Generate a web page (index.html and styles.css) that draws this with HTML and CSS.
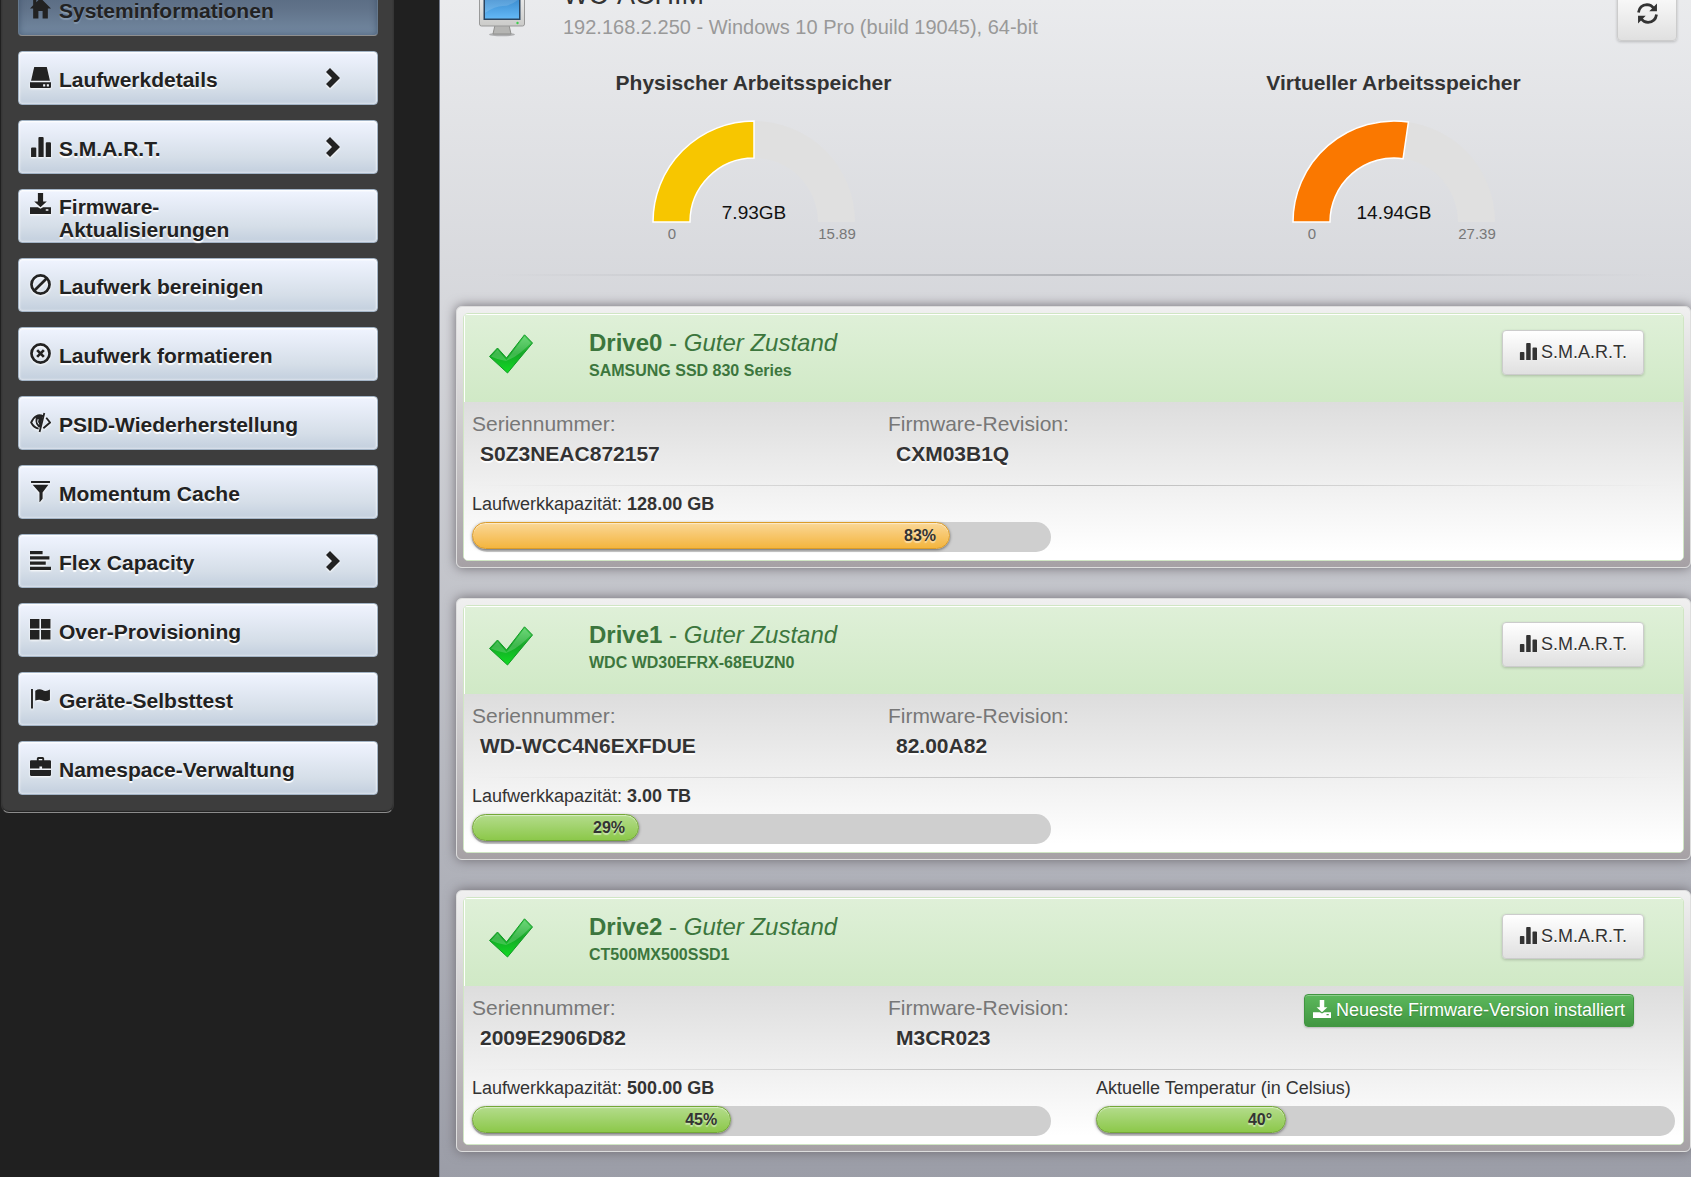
FILE: index.html
```
<!DOCTYPE html>
<html lang="de">
<head>
	<meta charset="utf-8">
	<title>Systeminformationen</title>
	<link rel="stylesheet" href="styles.css">
</head>
<body>
	<svg class="sprite" aria-hidden="true">
		<symbol id="i-home" viewBox="0 0 20 20"><path d="M10 0L20 10h-3v9.500h-5V12.500H8v7H3V10H0L3 7V1.500h3V4z"/></symbol>
		<symbol id="i-hdd" viewBox="0 0 20 20"><path d="M4 0h12l3 13H1z"/><path fill-rule="evenodd" d="M0 14.500h20V19q0 1-1 1H1q-1 0-1-1zM12.500 16.500v2h2v-2zM16 16.500v2h2v-2z"/></symbol>
		<symbol id="i-graph" viewBox="0 0 20 20"><path d="M1 12q0-1 1-1h3q1 0 1 1v8H1zM8 2q0-1 1-1h3q1 0 1 1v18H8zM15 7q0-1 1-1h3q1 0 1 1v13h-5z"/></symbol>
		<symbol id="i-download" viewBox="0 0 20 20"><path d="M7.500 0h5v8h3.500L10 13.500 4 8h3.500z"/><path fill-rule="evenodd" d="M0 13.500h7.500l2.500 1.500 2.500-1.500H20V20H0zM15 15.500v1.500h2.500v-1.500z"/></symbol>
		<symbol id="i-ban" viewBox="0 0 20 20"><g fill="none" stroke="currentColor" stroke-width="2.600"><circle cx="10" cy="10" r="8.600"/><path d="M4 16L16 4"/></g></symbol>
		<symbol id="i-remove" viewBox="0 0 20 20"><g fill="none" stroke="currentColor" stroke-width="2.600"><circle cx="10" cy="10" r="8.600"/><path d="M6.800 6.800l6.400 6.400M13.200 6.800l-6.400 6.400"/></g></symbol>
		<symbol id="i-eye" viewBox="0 0 22 20"><path fill="none" stroke="currentColor" stroke-width="1.900" d="M14 3.500Q6-.5 1.200 10 4 15.500 9 16.500"/><path d="M6 4Q10 1 13.500 3L11 15.500Q4.500 14 6 4z"/><path fill="none" stroke="#e8edf5" stroke-width="1" d="M8.500 6.500q-1.500 3 .8 5.500"/><path stroke="currentColor" stroke-width="1.900" d="M15 0L10 20"/><path fill="none" stroke="currentColor" stroke-width="1.900" d="M17 5l4 5-7 6"/></symbol>
		<symbol id="i-filter" viewBox="0 0 20 20"><path d="M1 0h18v2H1zM2.500 3.500h15L12 11v6l-3 3.500V11z"/></symbol>
		<symbol id="i-lines" viewBox="0 0 20 20"><path d="M0 1h12v3H0zM0 6h18.500v3H0zM0 11h15v3H0zM0 16h20v3H0z"/></symbol>
		<symbol id="i-grid" viewBox="0 0 20 20"><path d="M0 0h9v9H0zM10.500 0h9v9h-9zM0 10.500h9v9H0zM10.500 10.500h9v9h-9z"/></symbol>
		<symbol id="i-flag" viewBox="0 0 20 20"><path d="M1 1h1.800v18.500H1zM5 2.500Q9 0 12 2t7-.5v10q-4 2-7 .5T5 12z"/></symbol>
		<symbol id="i-case" viewBox="0 0 20 20"><path fill-rule="evenodd" d="M6.500 3V1.500Q6.500 0 8 0h4q1.500 0 1.500 1.500V3H19q1 0 1 1v7H0V4q0-1 1-1zM8.300 1.800V3h3.400V1.800zM9 9v2h2.500V9z"/><path d="M0 12.500h20V17q0 1-1 1H1q-1 0-1-1z"/></symbol>
		<symbol id="i-chevron" viewBox="0 0 16 20"><path d="M1 4l4-4 10 10L5 20l-4-4 6-6z"/></symbol>
		<symbol id="i-refresh" viewBox="0 0 20 20"><g fill="none" stroke="currentColor" stroke-width="2.600"><path d="M1.400 9Q2.500 1.800 9.500 1.500q4 0 6.500 3.500"/><path d="M18.600 11Q17.500 18.200 10.500 18.500q-4 0-6.500-3.500"/></g><path d="M19 .5v7.300h-7.300zM1 19.500v-7.300h7.300z"/></symbol>
		<symbol id="i-check" viewBox="0 0 44 40">
			<path fill="url(#checkFill)" stroke="#139a26" stroke-width="1" d="M.5 22.500L8.500 14 17.500 24 35.500 .8 43.500 9 18.500 39z"/>
			<path fill="#fff" fill-opacity=".18" d="M2 22.500L8.500 15.500 17.500 26 35.500 2.500 42 9Q37 14 31 19T17 27q-8-1-15-4.500z"/>
		</symbol>
		<defs>
			<linearGradient id="checkFill" x1="0" y1="0" x2="0" y2="1"><stop offset="0" stop-color="#4fd05d"/><stop offset=".5" stop-color="#15a827"/><stop offset="1" stop-color="#10dc22"/></linearGradient>
			<linearGradient id="screenFill" x1="0" y1="0" x2="0" y2="1"><stop offset="0" stop-color="#2f7fc4"/><stop offset="1" stop-color="#63b8f6"/></linearGradient>
			<linearGradient id="caseFill" x1="0" y1="0" x2="0" y2="1"><stop offset="0" stop-color="#f4f4f4"/><stop offset="1" stop-color="#cbcbc9"/></linearGradient>
		</defs>
	</svg>

	<div class="page">
		<aside class="sidebar">
			<nav class="menu">
				<a class="menu-link active" href="#"><svg class="icon"><use href="#i-home"/></svg><span class="menu-label">Systeminformationen</span></a>
				<a class="menu-link" href="#"><svg class="icon"><use href="#i-hdd"/></svg><span class="menu-label">Laufwerkdetails</span><svg class="chevron"><use href="#i-chevron"/></svg></a>
				<a class="menu-link" href="#"><svg class="icon"><use href="#i-graph"/></svg><span class="menu-label">S.M.A.R.T.</span><svg class="chevron"><use href="#i-chevron"/></svg></a>
				<a class="menu-link two-lines" href="#"><svg class="icon"><use href="#i-download"/></svg><span class="menu-label">Firmware-Aktualisierungen</span></a>
				<a class="menu-link" href="#"><svg class="icon"><use href="#i-ban"/></svg><span class="menu-label">Laufwerk bereinigen</span></a>
				<a class="menu-link" href="#"><svg class="icon"><use href="#i-remove"/></svg><span class="menu-label">Laufwerk formatieren</span></a>
				<a class="menu-link" href="#"><svg class="icon"><use href="#i-eye"/></svg><span class="menu-label">PSID-Wiederherstellung</span></a>
				<a class="menu-link" href="#"><svg class="icon"><use href="#i-filter"/></svg><span class="menu-label">Momentum Cache</span></a>
				<a class="menu-link" href="#"><svg class="icon"><use href="#i-lines"/></svg><span class="menu-label">Flex Capacity</span><svg class="chevron"><use href="#i-chevron"/></svg></a>
				<a class="menu-link" href="#"><svg class="icon"><use href="#i-grid"/></svg><span class="menu-label">Over-Provisioning</span></a>
				<a class="menu-link" href="#"><svg class="icon"><use href="#i-flag"/></svg><span class="menu-label">Geräte-Selbsttest</span></a>
				<a class="menu-link" href="#"><svg class="icon"><use href="#i-case"/></svg><span class="menu-label">Namespace-Verwaltung</span></a>
			</nav>
		</aside>

		<main class="content">
			<header class="host">
				<svg class="host-icon" viewBox="0 0 48 50" aria-hidden="true">
					<ellipse cx="24" cy="47.500" rx="13" ry="1.800" fill="#000" fill-opacity=".25"/>
					<path fill="#b5b5b3" stroke="#8f8f8d" d="M17 38h14l2 9H15z"/>
					<rect x="1.500" y="1.500" width="45" height="37.500" rx="2" fill="url(#caseFill)" stroke="#999"/>
					<rect x="5.500" y="4.500" width="37" height="28.500" fill="#2b4560"/>
					<rect x="7" y="6" width="34" height="25.500" fill="url(#screenFill)"/>
					<path fill="#fff" fill-opacity=".14" d="M7 26q10-7 18-7t16-7V6H7z"/>
					<circle cx="39.500" cy="36" r="1.200" fill="#3fce4e"/>
				</svg>
				<div class="host-text">
					<h1>WC-ACHIM</h1>
					<p>192.168.2.250 - Windows 10 Pro (build 19045), 64-bit</p>
				</div>
				<button class="btn btn-refresh" type="button" aria-label="Aktualisieren"><svg class="icon"><use href="#i-refresh"/></svg></button>
			</header>

			<section class="gauges">
				<div class="gauge">
					<h2>Physischer Arbeitsspeicher</h2>
					<svg viewBox="0 0 240 160">
						<path class="gauge-track" d="M19 127A101 101 0 0 1 221 127H184A64 64 0 0 0 56 127z"/>
						<path class="gauge-value yellow" d="M19 127A101 101 0 0 1 120 26V63A64 64 0 0 0 56 127z"/>
						<text class="gauge-number" x="120" y="124">7.93GB</text>
						<text class="gauge-limit" x="38" y="144">0</text>
						<text class="gauge-limit" x="203" y="144">15.89</text>
					</svg>
				</div>
				<div class="gauge">
					<h2>Virtueller Arbeitsspeicher</h2>
					<svg viewBox="0 0 240 160">
						<path class="gauge-track" d="M19 127A101 101 0 0 1 221 127H184A64 64 0 0 0 56 127z"/>
						<path class="gauge-value orange" d="M19 127A101 101 0 0 1 134.400 27L129.100 63.700A64 64 0 0 0 56 127z"/>
						<text class="gauge-number" x="120" y="124">14.94GB</text>
						<text class="gauge-limit" x="38" y="144">0</text>
						<text class="gauge-limit" x="203" y="144">27.39</text>
					</svg>
				</div>
			</section>

			<hr class="rule">

			<section class="drives">
				<article class="drive">
					<div class="panel">
						<header class="panel-head">
							<svg class="check"><use href="#i-check"/></svg>
							<div class="panel-title">
								<h3><b>Drive0</b> - <i>Guter Zustand</i></h3>
								<p>SAMSUNG SSD 830 Series</p>
							</div>
							<button class="btn" type="button"><svg class="icon-sm"><use href="#i-graph"/></svg>S.M.A.R.T.</button>
						</header>
						<div class="panel-body">
							<div class="row thirds">
								<dl><dt>Seriennummer:</dt><dd>S0Z3NEAC872157</dd></dl>
								<dl><dt>Firmware-Revision:</dt><dd>CXM03B1Q</dd></dl>
							</div>
							<hr class="rule light">
							<div class="row halves">
								<div class="meter">
									<p>Laufwerkkapazität: <b>128.00 GB</b></p>
									<div class="track"><div class="fill warn" style="width: 83%">83%</div></div>
								</div>
							</div>
						</div>
					</div>
				</article>

				<article class="drive">
					<div class="panel">
						<header class="panel-head">
							<svg class="check"><use href="#i-check"/></svg>
							<div class="panel-title">
								<h3><b>Drive1</b> - <i>Guter Zustand</i></h3>
								<p>WDC WD30EFRX-68EUZN0</p>
							</div>
							<button class="btn" type="button"><svg class="icon-sm"><use href="#i-graph"/></svg>S.M.A.R.T.</button>
						</header>
						<div class="panel-body">
							<div class="row thirds">
								<dl><dt>Seriennummer:</dt><dd>WD-WCC4N6EXFDUE</dd></dl>
								<dl><dt>Firmware-Revision:</dt><dd>82.00A82</dd></dl>
							</div>
							<hr class="rule light">
							<div class="row halves">
								<div class="meter">
									<p>Laufwerkkapazität: <b>3.00 TB</b></p>
									<div class="track"><div class="fill" style="width: 29%">29%</div></div>
								</div>
							</div>
						</div>
					</div>
				</article>

				<article class="drive">
					<div class="panel">
						<header class="panel-head">
							<svg class="check"><use href="#i-check"/></svg>
							<div class="panel-title">
								<h3><b>Drive2</b> - <i>Guter Zustand</i></h3>
								<p>CT500MX500SSD1</p>
							</div>
							<button class="btn" type="button"><svg class="icon-sm"><use href="#i-graph"/></svg>S.M.A.R.T.</button>
						</header>
						<div class="panel-body">
							<div class="row thirds">
								<dl><dt>Seriennummer:</dt><dd>2009E2906D82</dd></dl>
								<dl><dt>Firmware-Revision:</dt><dd>M3CR023</dd></dl>
								<div><button class="btn-firmware" type="button"><svg class="icon-sm"><use href="#i-download"/></svg>Neueste Firmware-Version installiert</button></div>
							</div>
							<hr class="rule light">
							<div class="row halves">
								<div class="meter">
									<p>Laufwerkkapazität: <b>500.00 GB</b></p>
									<div class="track"><div class="fill" style="width: 45%">45%</div></div>
								</div>
								<div class="meter">
									<p>Aktuelle Temperatur (in Celsius)</p>
									<div class="track"><div class="fill" style="width: 33%">40°</div></div>
								</div>
							</div>
						</div>
					</div>
				</article>
			</section>
		</main>
	</div>
</body>
</html>
```

FILE: styles.css
```
*{margin: 0;padding: 0;box-sizing: border-box;}
html{height: 100%;}
body{height: 100%;overflow: hidden;background: #202020;color: #333;font-family: "Liberation Sans", Arial, sans-serif;font-size: 18px;}
a{color: inherit;text-decoration: none;}
svg{display: block;flex: none;fill: currentColor;}
.sprite{position: absolute;width: 0;height: 0;}
.icon{width: 21px;height: 21px;}
.icon-sm{width: 18px;height: 18px;margin-top: -4px;}

/* the page is scrolled down a little, its top edge is out of view */
.page{display: flex;min-height: calc(100% + 30px);margin-top: -30px;}

/* menu */
.sidebar{flex: none;width: 439px;padding: 0 45px 0 1px;}
.menu{display: flex;flex-direction: column;gap: 15px;padding: 12px 15px 17px 16px;background: #3d3d3d;border: 1px solid #363636;border-top: 0;border-bottom: 1px solid #8c8c8c;border-radius: 0 0 8px 8px;box-shadow: inset 0 -1px 1px #222;}
.menu-link{display: flex;align-items: center;height: 54px;padding: 0 36px 0 11px;color: #222;font-size: 21px;font-weight: bold;line-height: 23px;border: 1px solid #a3b4c6;border-radius: 4px;background: linear-gradient(#f0f4ff, #d5dee8 70%, #c3cfde);box-shadow: inset 0 1px 2px #fff, inset 0 0 3px rgba(255,255,255,.8);text-shadow: 0 2px 1px #fff;}
.menu-link .icon,
.menu-link .chevron{filter: drop-shadow(0 1px 1px #fff);}
.menu-link .icon{margin-top: -2px;}
.menu-label{max-width: 250px;margin-left: 8px;padding-top: 2px;}
.menu-link.two-lines{align-items: flex-start;}
.menu-link.two-lines .icon,
.menu-link.two-lines .menu-label{margin-top: 3px;}
.menu-link.active{border-color: #66798d #66798d #8f8f8f;background: linear-gradient(#52657d, #61738a 50%, #7389a1);box-shadow: inset 0 0 6px rgba(50,70,95,.6);text-shadow: 0 2px 1px #8598ad;}
.menu-link.active .icon{filter: none;}
.chevron{width: 16px;height: 20px;margin-left: auto;}

/* content */
.content{flex: 1;min-width: 0;padding-left: 16px;border-left: 1px solid #747b8b;background: linear-gradient(#ecedef, #9b9da7);}
.host{display: flex;padding: 11px 14px 30px 22px;}
.host-icon{width: 48px;height: 50px;margin-top: 6px;}
.host-text{flex: 1;margin-left: 37px;}
.host-text h1{margin-bottom: 6px;font-size: 27px;font-weight: normal;line-height: 28px;}
.host-text p{color: #999;font-size: 20px;line-height: 24px;}

.btn{display: flex;align-items: center;justify-content: center;gap: 4px;height: 45px;padding: 0 16px;color: #333;font: 18px "Liberation Sans", Arial, sans-serif;border: 1px solid #ccc;border-radius: 4px;background: linear-gradient(#fff, #e0e0e0);box-shadow: inset 0 1px 0 rgba(255,255,255,.2), 0 1px 3px rgba(0,0,0,.2);text-shadow: 0 1px 0 #fff;}
.btn-refresh{width: 60px;height: 55px;margin-top: 5px;padding: 0;}

.gauges{display: grid;grid-template-columns: 1fr 1fr;gap: 45px;}
.gauge{display: flex;flex-direction: column;align-items: center;}
.gauge h2{font-size: 21px;line-height: 24px;}
.gauge svg{width: 240px;height: 160px;}
.gauge-track{fill: #e0e0e0;}
.gauge-value{stroke: #fff;stroke-width: 1.5px;}
.yellow{fill: #f7c600;}
.orange{fill: #fa7800;}
.gauge-number{fill: #111;font-size: 19px;text-anchor: middle;}
.gauge-limit{fill: #777;font-size: 15px;text-anchor: middle;}

.rule{height: 2px;margin: 19px 0 30px;border: 0;background: linear-gradient(90deg, transparent 3%, #b2b4b9 50%, transparent 97%);}
.rule.light{height: 1px;margin: 0 8px;background: linear-gradient(90deg, transparent, #bbb 50%, transparent);}

/* drives */
.drives{display: flex;flex-direction: column;gap: 30px;padding-bottom: 30px;}
.drive{padding: 6px;border: 1px solid #ddd;border-radius: 6px;background: linear-gradient(#f0f0f0, #a6a1a5);box-shadow: 0 0 12px #6e6a70;}
.panel{overflow: hidden;border: 1px solid #d0e6c4;border-radius: 5px;background: #fff;}
.panel-head{display: flex;align-items: flex-start;height: 88px;padding: 16px 39px 0 24px;color: #3c763d;background: linear-gradient(#dff0d8, #d0e9c6);box-shadow: inset 1px 1px 0 #fff;}
.check{width: 46px;height: 40px;margin-top: 4px;}
.panel-title{flex: 1;margin-left: 55px;}
.panel-title h3{font-size: 24px;font-weight: normal;line-height: 26px;}
.panel-title p{font-size: 16px;font-weight: bold;line-height: 20px;margin-top: 5px;}
.panel-body{height: 158px;padding-top: 10px;background: linear-gradient(#ddd, #fff 95%);}
.row{display: grid;column-gap: 45px;padding: 0 8px;}
.thirds{grid-template-columns: repeat(3, 1fr);height: 73px;}
.halves{grid-template-columns: repeat(2, 1fr);}
dt{color: #777;font-size: 21px;line-height: 24px;}
dd{margin: 6px 0 0 8px;font-size: 21px;font-weight: bold;line-height: 24px;text-shadow: 0 2px 1px #fff;}
.btn-firmware{display: flex;align-items: center;gap: 5px;height: 33px;margin-top: -2px;padding: 0 8px;color: #fff;font: 18px "Liberation Sans", Arial, sans-serif;white-space: nowrap;border: 1px solid #419641;border-radius: 4px;background: linear-gradient(#5cb85c, #419641);box-shadow: inset 0 1px 0 rgba(255,255,255,.3), 0 1px 2px rgba(0,0,0,.2);text-shadow: 0 1px 1px #3a843a;}
.meter p{margin: 8px 0;font-size: 18px;line-height: 20px;}
.track{height: 30px;padding-right: 3px;border-radius: 15px;background: #cfcfcf;}
.fill{height: 27px;padding-right: 13px;color: #333;font-size: 16px;font-weight: bold;line-height: 25px;text-align: right;border: 1px solid #74a838;border-radius: 14px;background: linear-gradient(#b4dc8c, #8cc84a);box-shadow: inset 0 1px 1px rgba(255,255,255,.5), 0 1px 3px rgba(0,0,0,.5);text-shadow: 0 2px 1px rgba(255,255,255,.5);}
.fill.warn{border-color: #dc9c28;background: linear-gradient(#fad796, #f4b53f);}
```
